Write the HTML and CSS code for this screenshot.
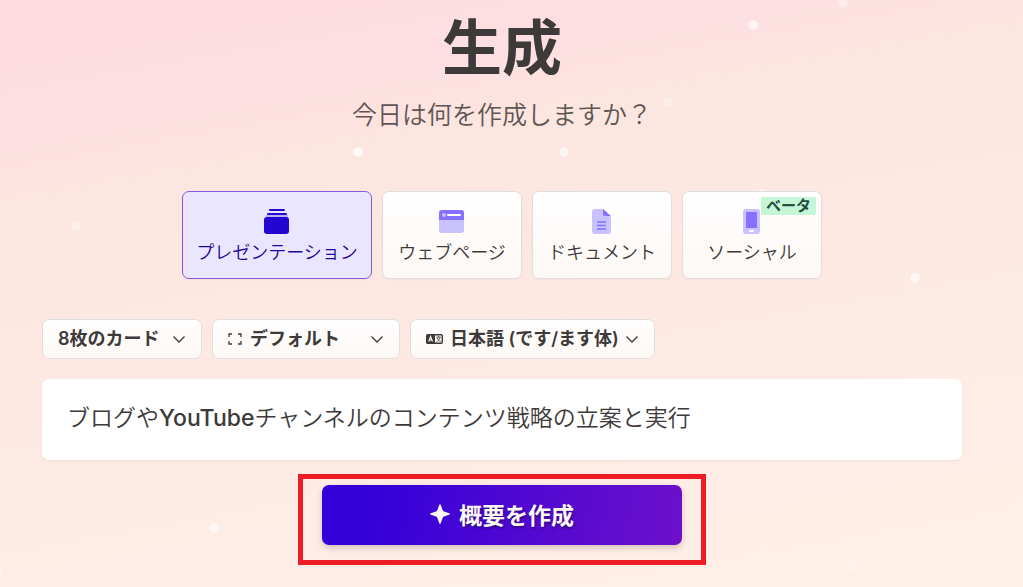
FILE: index.html
```html
<!DOCTYPE html>
<html lang="ja">
<head>
<meta charset="utf-8">
<meta name="viewport" content="width=device-width, initial-scale=1">
<title>生成</title>
<link rel="stylesheet" href="styles.css">
</head>
<body>
<svg class="dots" aria-hidden="true">
  <g fill="#fff">
    <circle cx="753" cy="25" r="5" opacity=".6"/>
    <circle cx="843" cy="2" r="5" opacity=".4"/>
    <circle cx="668" cy="102" r="5" opacity=".3"/>
    <circle cx="358" cy="152" r="5" opacity=".7"/>
    <circle cx="564" cy="152" r="5" opacity=".6"/>
    <circle cx="76" cy="226" r="5" opacity=".3"/>
    <circle cx="762" cy="194" r="5" opacity=".6"/>
    <circle cx="915" cy="278" r="5" opacity=".6"/>
    <circle cx="214" cy="528" r="5" opacity=".6"/>
    <circle cx="852" cy="565" r="5" opacity=".3"/>
    <circle cx="-2" cy="573" r="5" opacity=".4"/>
  </g>
</svg>
<main class="page">
  <header class="intro">
    <h1 class="title">生成</h1>
    <p class="subtitle">今日は何を作成しますか？</p>
  </header>

  <div class="types">
    <button class="type type-active" type="button" aria-pressed="true">
      <svg width="26" height="26" viewBox="0 0 26 26" aria-hidden="true">
        <rect x="5" y="0" width="16" height="2" rx="1" fill="#2306cf"/>
        <rect x="3" y="4" width="20" height="2" rx="1" fill="#2306cf"/>
        <rect x="2" y="6" width="22" height="3" fill="#bcb0f5"/>
        <rect x="0" y="8" width="25" height="17" rx="3" fill="#2306cf"/>
      </svg>
      <span>プレゼンテーション</span>
    </button>
    <button class="type" type="button" aria-pressed="false">
      <svg width="26" height="26" viewBox="0 0 26 26" aria-hidden="true">
        <rect x="0" y="1" width="25" height="23" rx="3" fill="#cac1ff"/>
        <path d="M0 11V4a3 3 0 0 1 3-3h19a3 3 0 0 1 3 3v7z" fill="#8570ff"/>
        <circle cx="5" cy="6" r="2" fill="#cac1ff"/>
        <rect x="8" y="5" width="14" height="2" rx="1" fill="#fff"/>
      </svg>
      <span>ウェブページ</span>
    </button>
    <button class="type" type="button" aria-pressed="false">
      <svg width="26" height="26" viewBox="0 0 26 26" aria-hidden="true">
        <path d="M6 0h8l8 8v14a3 3 0 0 1-3 3H6a3 3 0 0 1-3-3V3a3 3 0 0 1 3-3z" fill="#cac1ff"/>
        <path d="M14 0l8 7h-6a2 2 0 0 1-2-2z" fill="#8570ff"/>
        <path d="M8 13h9M8 16.500h9M8 20h9" stroke="#8570ff" stroke-width="1.300"/>
      </svg>
      <span>ドキュメント</span>
    </button>
    <button class="type" type="button" aria-pressed="false">
      <svg width="26" height="26" viewBox="0 0 26 26" aria-hidden="true">
        <rect x="4" y="0" width="17" height="25" rx="3" fill="#cac1ff"/>
        <rect x="7" y="3" width="11" height="16" fill="#8570ff"/>
        <rect x="10" y="21" width="5" height="2" rx="1" fill="#fff"/>
      </svg>
      <span>ソーシャル</span>
      <span class="badge">ベータ</span>
    </button>
  </div>

  <form class="form">
    <div class="options">
      <div class="option option-cards">
        <select class="select" aria-label="カードの枚数"><option>8枚のカード</option></select>
        <svg class="chevron" viewBox="0 0 14 14" aria-hidden="true"><path d="M1.500 4.500L7 10l5.500-5.500"/></svg>
      </div>
      <div class="option option-size">
        <svg width="15" height="12" viewBox="0 0 15 12" fill="none" stroke="#3d3a39" stroke-width="1.300" aria-hidden="true"><path d="M1 4V1h3M10 1h3v3M13 8v3h-3M4 11H1V8"/></svg>
        <select class="select" aria-label="サイズ"><option>デフォルト</option></select>
        <svg class="chevron" viewBox="0 0 14 14" aria-hidden="true"><path d="M1.500 4.500L7 10l5.500-5.500"/></svg>
      </div>
      <div class="option option-language">
        <svg width="17" height="12" viewBox="0 0 17 12" aria-hidden="true">
          <rect x=".7" y="1.700" width="15.600" height="8.600" rx="1" fill="none" stroke="#3d3a39" stroke-width="1.400"/>
          <path d="M1 1.500h8v9H1z" fill="#3d3a39"/>
          <path d="M2.700 8.500L4.600 3.500l1.900 5M3.300 7h2.600" fill="none" stroke="#fff" stroke-width="1.100"/>
          <path d="M10.300 4.200h4.600M12.600 3v1.200M14 4.500c-.5 2-1.800 3.400-3.600 4.300M11.300 5c.6 1.700 1.800 3 3.400 3.700" fill="none" stroke="#3d3a39" stroke-width=".8"/>
        </svg>
        <select class="select" aria-label="言語"><option>日本語 (です/ます体)</option></select>
        <svg class="chevron" viewBox="0 0 14 14" aria-hidden="true"><path d="M1.500 4.500L7 10l5.500-5.500"/></svg>
      </div>
    </div>
    <input class="prompt" type="text" aria-label="作成する内容" value="ブログやYouTubeチャンネルのコンテンツ戦略の立案と実行">
    <div class="highlight">
      <button class="submit" type="button">
        <svg width="20" height="20" viewBox="0 0 20 20" aria-hidden="true"><path d="M10 0Q10.500 0 11 1.500L12.600 6Q13 7 14 7.400L18.500 9Q20 9.500 20 10T18.500 11L14 12.600Q13 13 12.600 14L11 18.500Q10.500 20 10 20T9 18.500L7.400 14Q7 13 6 12.600L1.500 11Q0 10.500 0 10T1.500 9L6 7.400Q7 7 7.400 6L9 1.500Q9.500 0 10 0z" fill="#faf7f5"/></svg>
        <span>概要を作成</span>
      </button>
    </div>
  </form>
</main>
</body>
</html>
```
FILE: styles.css
```css
* { box-sizing: border-box; }

body {
  margin: 0;
  min-height: 100vh;
  overflow: hidden;
  color: #3d3a39;
  font-family: Inter, "Noto Sans CJK JP", sans-serif;
  background: linear-gradient(170deg, #fedce1 0%, #fddfe1 18%, #fee3e0 24%, #fbe7df 29%, #fde9e2 52%, #feede6 80%, #fff1e7 100%);
}

button, select, input { font: inherit; color: inherit; }

.dots {
  position: absolute;
  inset: 0;
  width: 100%;
  height: 100%;
}

.page {
  position: relative;
  padding: 12px 61px 0 42px;
}

.intro { text-align: center; }

.title {
  margin: 0;
  font-size: 60px;
  line-height: 72px;
  font-weight: 700;
}

.subtitle {
  margin: 12px 0 0;
  font-family: "Noto Sans CJK JP DemiLight", "Noto Sans CJK JP Light", "Noto Sans CJK JP", sans-serif;
  font-size: 25px;
  line-height: 34px;
  font-weight: 300;
  color: #5f5654;
}

.types {
  display: flex;
  justify-content: center;
  gap: 10px;
  margin-top: 61px;
}

.type {
  position: relative;
  display: flex;
  flex-direction: column;
  align-items: center;
  gap: 4px;
  width: 140px;
  padding: 17px 0 15px;
  border: 1px solid #e2dedf;
  border-radius: 7px;
  background: linear-gradient(#fff, #fdf8f5);
  box-shadow: 0 1px 2px rgba(60, 40, 40, 0.05);
  font-family: "Noto Sans CJK JP DemiLight", "Noto Sans CJK JP Light", "Noto Sans CJK JP", sans-serif;
  font-size: 18px;
  line-height: 24px;
  font-weight: 300;
  white-space: nowrap;
}

.type-active {
  width: 190px;
  border-color: #835bdb;
  background: #ebe6ff;
  color: #1e0699;
}

.badge {
  position: absolute;
  top: 5px;
  right: 5px;
  padding: 0 5px 2px;
  border-radius: 2px;
  background: #c6f6d8;
  color: #23503f;
  font-family: "Noto Sans CJK JP", sans-serif;
  font-size: 15px;
  line-height: 16px;
  font-weight: 700;
}

.form {
  display: flex;
  flex-direction: column;
  margin-top: 40px;
}

.options {
  display: flex;
  gap: 10px;
}

.option {
  display: flex;
  align-items: center;
  height: 40px;
  padding: 0 15px;
  border: 1px solid #e2dedf;
  border-radius: 7px;
  background: linear-gradient(#fff, #fdf8f5);
}

.option-cards { width: 160px; }
.option-size { width: 188px; gap: 7px; }
.option-language { width: 245px; gap: 7px; }

.select {
  appearance: none;
  flex: 1;
  min-width: 0;
  padding: 0;
  border: 0;
  background: none;
  font-size: 18px;
  line-height: 26px;
  font-weight: 600;
}

.chevron {
  flex: none;
  width: 14px;
  height: 14px;
  fill: none;
  stroke: #3d3a39;
  stroke-width: 1.3;
}

.prompt {
  width: 100%;
  height: 81px;
  margin-top: 20px;
  padding: 0 25px 8px;
  border: 0;
  border-radius: 7px;
  background: #fff;
  box-shadow: 0 1px 2px rgba(60, 40, 40, 0.08);
  font-family: Inter, "Noto Sans CJK JP DemiLight", "Noto Sans CJK JP Light", "Noto Sans CJK JP", sans-serif;
  font-size: 23px;
  font-weight: 500;
}

.highlight {
  align-self: center;
  margin-top: 14px;
  padding: 6px 19px 15px;
  border: 5px solid #ee1c25;
}

.submit {
  display: flex;
  align-items: center;
  justify-content: center;
  gap: 9px;
  width: 360px;
  height: 60px;
  padding: 0 0 2px;
  border: 0;
  border-radius: 7px;
  background: linear-gradient(100deg, #3300d9 12%, #6d10cb 100%);
  box-shadow: 0 3px 6px rgba(60, 40, 40, 0.22);
  color: #faf7f5;
  font-size: 23px;
  font-weight: 700;
  text-shadow: 1px 2px 2px rgba(0, 0, 0, 0.35);
}
```
